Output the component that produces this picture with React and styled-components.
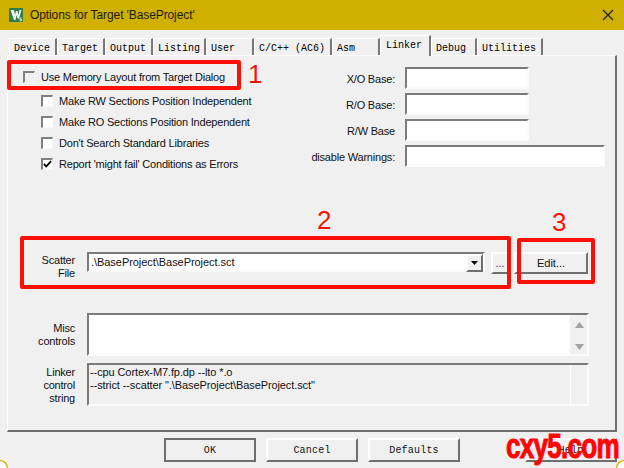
import { Fragment } from "react";
import styled, { createGlobalStyle } from "styled-components";

const GlobalStyle = createGlobalStyle`
  html, body { margin: 0; padding: 0; background: #fff; }
  #root { width: 624px; height: 468px; }
`;

const Shell = styled.div`
  position: relative;
  width: 624px;
  height: 468px;
  overflow: hidden;
  background: #f0f0f0;
  font-family: "Liberation Sans", Arial, sans-serif;
  font-size: 11px;
  letter-spacing: -0.2px;
  color: #111;
`;

const TitleBar = styled.div`
  height: 30px;
  background: #cfb000;
  display: flex;
  align-items: center;
  padding: 0 10px 0 9px;
  gap: 7px;
  font-size: 12px;
  letter-spacing: -0.1px;
  color: #1c1a08;
`;

const TitleText = styled.span`
  flex: 1;
`;

const TabRow = styled.div`
  display: flex;
  align-items: flex-end;
  height: 18px;
  margin-top: 7px;
  padding-left: 9px;
  position: relative;
  z-index: 1;
`;

const Tab = styled.div`
  box-sizing: border-box;
  width: ${(p) => p.$w}px;
  height: ${(p) => (p.$active ? 21 : 17)}px;
  margin-bottom: ${(p) => (p.$active ? -1 : 0)}px;
  padding: ${(p) => (p.$active ? "3px 0 0 5px" : "3px 0 0 4px")};
  border-top: 1px solid #fff;
  border-left: 1px solid #fff;
  border-right: 2px solid #777;
  background: #f0f0f0;
  font-family: "Liberation Mono", monospace;
  font-size: 10px;
  letter-spacing: 0;
  line-height: 13px;
  color: #000;
  white-space: pre;
`;

const Panel = styled.div`
  box-sizing: border-box;
  width: 610px;
  height: 377px;
  margin-left: 7px;
  padding: 10px 0 0 0;
  border-top: 1px solid #fff;
  border-left: 1px solid #fff;
  border-right: 2px solid #6f6f6f;
  border-bottom: 2px solid #6f6f6f;
`;

const TopSection = styled.div`
  display: flex;
  justify-content: space-between;
  height: 110px;
`;

const Checks = styled.div`
  display: flex;
  flex-direction: column;
  padding-left: 15px;
`;

const CheckRow = styled.div`
  display: flex;
  align-items: center;
  gap: 6px;
  height: 21px;
  margin-left: ${(p) => (p.$nested ? 18 : 0)}px;
  margin-bottom: ${(p) => (p.$gapAfter ? 3 : 0)}px;
`;

const Box = styled.span`
  box-sizing: border-box;
  width: 12px;
  height: 12px;
  background: ${(p) => (p.$plain ? "#f0f0f0" : "#fff")};
  border: 1px solid #f8f8f8;
  border-top: 2px solid #808080;
  border-left: 2px solid #808080;
  display: flex;
  align-items: center;
  justify-content: center;
`;

const Fields = styled.div`
  display: grid;
  grid-template-columns: 100px auto;
  column-gap: 10px;
  row-gap: 4px;
  margin: 1px 10px 0 0;
  align-self: flex-start;
  grid-auto-rows: 22px;
`;

const FieldLabel = styled.span`
  text-align: right;
  line-height: 24px;
  white-space: nowrap;
`;

const Sunken = styled.div`
  box-sizing: border-box;
  width: ${(p) => p.$w}px;
  height: ${(p) => p.$h}px;
  background: ${(p) => p.$bg || "#fff"};
  border: 2px solid #fbfbfb;
  border-top-color: #7a7a7a;
  border-left-color: #7a7a7a;
`;

const FormRow = styled.div`
  display: grid;
  grid-template-columns: 60px auto;
  column-gap: 12px;
  padding-left: 7px;
  margin-top: ${(p) => p.$mt}px;
`;

const RowLabel = styled.div`
  text-align: right;
  line-height: 13px;
  padding-top: ${(p) => p.$top}px;
`;

const ScatterControls = styled.div`
  display: flex;
  align-items: flex-start;
`;

const Combo = styled(Sunken)`
  display: flex;
  justify-content: space-between;
  letter-spacing: -0.05px;
  line-height: 17px;
  padding-left: 2px;
`;

const ComboArrow = styled.div`
  box-sizing: border-box;
  width: 17px;
  height: 18px;
  background: #f0f0f0;
  border: 2px solid #6f6f6f;
  border-top-color: #fff;
  border-left-color: #fff;
  display: flex;
  align-items: center;
  justify-content: center;
`;

const Button = styled.div`
  box-sizing: border-box;
  flex: none;
  width: ${(p) => p.$w}px;
  height: ${(p) => p.$h}px;
  margin-left: ${(p) => p.$ml || 0}px;
  background: #f0f0f0;
  border: 2px solid #6f6f6f;
  border-top-color: ${(p) => (p.$default ? "#6f6f6f" : "#fff")};
  border-left-color: ${(p) => (p.$default ? "#6f6f6f" : "#fff")};
  display: flex;
  align-items: center;
  justify-content: center;
  color: ${(p) => p.$color || "#111"};
  font-family: ${(p) => (p.$mono ? '"Liberation Mono", monospace' : "inherit")};
  font-size: ${(p) => (p.$mono ? "10px" : "11px")};
  letter-spacing: ${(p) => (p.$mono ? "0.2px" : "0")};
`;

const MultiBox = styled(Sunken)`
  display: flex;
  letter-spacing: -0.1px;
  line-height: 13px;
`;

const BoxText = styled.div`
  flex: 1;
  padding: 1px 0 0 1px;
  white-space: nowrap;
`;

const ScrollTrack = styled.div`
  width: 16px;
  background: #f0f0f0;
  border-left: 1px solid ${(p) => (p.$divider ? "#fff" : "#f0f0f0")};
  display: flex;
  flex-direction: column;
  justify-content: space-between;
  align-items: center;
  padding: 7px 0 4px;
`;

const ButtonRow = styled.div`
  display: flex;
  margin-top: 6px;
  padding: 0 7px 0 164px;
`;

const Spacer = styled.div`
  flex: 1;
`;

const RedBox = styled.div`
  position: absolute;
  box-sizing: border-box;
  left: ${(p) => p.$x}px;
  top: ${(p) => p.$y}px;
  width: ${(p) => p.$w}px;
  height: ${(p) => p.$h}px;
  border: 4px solid #fc1005;
  border-radius: 2px;
`;

const Callout = styled.div`
  position: absolute;
  left: ${(p) => p.$x}px;
  top: ${(p) => p.$y}px;
  color: #fc1005;
  font-size: 26px;
  line-height: 28px;
  letter-spacing: 0;
  text-shadow: 0 0 2px #fff, 0 0 2px #fff;
`;

const Watermark = styled.div`
  position: absolute;
  left: 506px;
  top: 426px;
  font-size: 35px;
  line-height: 40px;
  font-weight: 700;
  color: #fd0505;
  letter-spacing: -1px;
  white-space: nowrap;
  transform: scaleX(0.745);
  transform-origin: left top;
  -webkit-text-stroke: 1px #fd0505;
`;

const Corner = styled.div`
  position: absolute;
  ${(p) => (p.$right ? "right: 0;" : "left: 0;")}
  bottom: 0;
  width: 8px;
  height: 8px;
  background: #fff;
  box-shadow: inset ${(p) => (p.$right ? "1px" : "-1px")} 1px 0 #cfb000;
  border-top-${(p) => (p.$right ? "left" : "right")}-radius: 8px;
`;

const KeilIcon = () => (
  <svg width="14" height="14" viewBox="0 0 14 14" style={{ flex: "none" }}>
    <rect width="14" height="14" rx="1" fill="#2f7d47" />
    <path d="M1.5 2 H5 L6 7 L7 3 H8.5 L9.5 7 L10.5 2 H12.5 L10 10.5 H8.5 L7.5 7 L6.5 12 H5 Z" fill="#f2f7f2" />
    <path d="M10.2 9.5 H13 V13 H10.2 Z" fill="#2f7d47" />
    <path d="M12.6 10 H10.8 V11.3 H12.4 V12.8 H10.6" fill="none" stroke="#fff" strokeWidth="0.8" />
  </svg>
);

const CloseIcon = () => (
  <svg width="12" height="12" viewBox="0 0 12 12" style={{ flex: "none" }}>
    <path d="M1 1 L11 11 M11 1 L1 11" stroke="#1a1806" strokeWidth="1.1" />
  </svg>
);

const CheckMark = () => (
  <svg width="10" height="10" viewBox="0 0 10 10">
    <path d="M1 5 L3.6 7.6 L9 1.8" fill="none" stroke="#000" strokeWidth="2" />
  </svg>
);

const tabs = [
  ["Device", 48],
  ["Target", 48],
  ["Output", 48],
  ["Listing", 53],
  ["User", 48],
  ["C/C++ (AC6)", 78],
  ["Asm", 48],
  ["Linker", 51, true],
  ["Debug", 46],
  ["Utilities", 66],
];

const nestedChecks = [
  ["Make RW Sections Position Independent"],
  ["Make RO Sections Position Independent"],
  ["Don't Search Standard Libraries"],
  ["Report 'might fail' Conditions as Errors", true],
];

const baseFields = [
  ["X/O Base:", 124],
  ["R/O Base:", 124],
  ["R/W Base", 124],
  ["disable Warnings:", 200],
];

const App = () => {
  return (
    <Shell>
      <GlobalStyle />
      <TitleBar>
        <KeilIcon />
        <TitleText>Options for Target 'BaseProject'</TitleText>
        <CloseIcon />
      </TitleBar>
      <TabRow>
        {tabs.map(([name, w, active]) => (
          <Tab key={name} $w={w} $active={active}>
            {name}
          </Tab>
        ))}
      </TabRow>
      <Panel>
        <TopSection>
          <Checks>
            <CheckRow $gapAfter>
              <Box $plain />
              <span>Use Memory Layout from Target Dialog</span>
            </CheckRow>
            {nestedChecks.map(([text, checked]) => (
              <CheckRow key={text} $nested>
                <Box>{checked && <CheckMark />}</Box>
                <span>{text}</span>
              </CheckRow>
            ))}
          </Checks>
          <Fields>
            {baseFields.map(([label, w]) => (
              <Fragment key={label}>
                <FieldLabel>{label}</FieldLabel>
                <Sunken $w={w} $h={22} />
              </Fragment>
            ))}
          </Fields>
        </TopSection>
        <FormRow $mt={76}>
          <RowLabel $top={2}>
            Scatter
            <br />
            File
          </RowLabel>
          <ScatterControls>
            <Combo $w={398} $h={20}>
              <span>.\BaseProject\BaseProject.sct</span>
              <ComboArrow>
                <svg width="7" height="4" viewBox="0 0 7 4">
                  <path d="M0 0 H7 L3.5 4 Z" fill="#000" />
                </svg>
              </ComboArrow>
            </Combo>
            <Button $w={18} $h={22} $ml={6} $color="#5a1a8a">...</Button>
            <Button $w={74} $h={22} $ml={5}>Edit...</Button>
          </ScatterControls>
        </FormRow>
        <FormRow $mt={33}>
          <RowLabel $top={9}>
            Misc
            <br />
            controls
          </RowLabel>
          <MultiBox $w={502} $h={43}>
            <BoxText />
            <ScrollTrack>
              <svg width="9" height="6" viewBox="0 0 9 6">
                <path d="M0 6 L4.5 0 L9 6 Z" fill="#a3a3a3" />
              </svg>
              <svg width="9" height="6" viewBox="0 0 9 6">
                <path d="M0 0 H9 L4.5 6 Z" fill="#a3a3a3" />
              </svg>
            </ScrollTrack>
          </MultiBox>
        </FormRow>
        <FormRow $mt={7}>
          <RowLabel $top={3}>
            Linker
            <br />
            control
            <br />
            string
          </RowLabel>
          <MultiBox $w={502} $h={43} $bg="#f0f0f0">
            <BoxText>
              --cpu Cortex-M7.fp.dp --lto *.o
              <br />
              --strict --scatter ".\BaseProject\BaseProject.sct"
            </BoxText>
            <ScrollTrack $divider />
          </MultiBox>
        </FormRow>
      </Panel>
      <ButtonRow>
        <Button $w={92} $h={24} $mono $default>OK</Button>
        <Button $w={92} $h={24} $ml={10} $mono>Cancel</Button>
        <Button $w={92} $h={24} $ml={10} $mono>Defaults</Button>
        <Spacer />
        <Button $w={92} $h={24} $mono>Help</Button>
      </ButtonRow>

      <RedBox $x={7} $y={60} $w={234} $h={30} />
      <Callout $x={248} $y={60}>1</Callout>
      <RedBox $x={20} $y={236} $w={491} $h={53} />
      <Callout $x={317} $y={206}>2</Callout>
      <RedBox $x={517} $y={238} $w={78} $h={46} />
      <Callout $x={552} $y={208}>3</Callout>
      <Watermark>cxy5.com</Watermark>
      <Corner />
      <Corner $right />
    </Shell>
  );
};

export default App;
